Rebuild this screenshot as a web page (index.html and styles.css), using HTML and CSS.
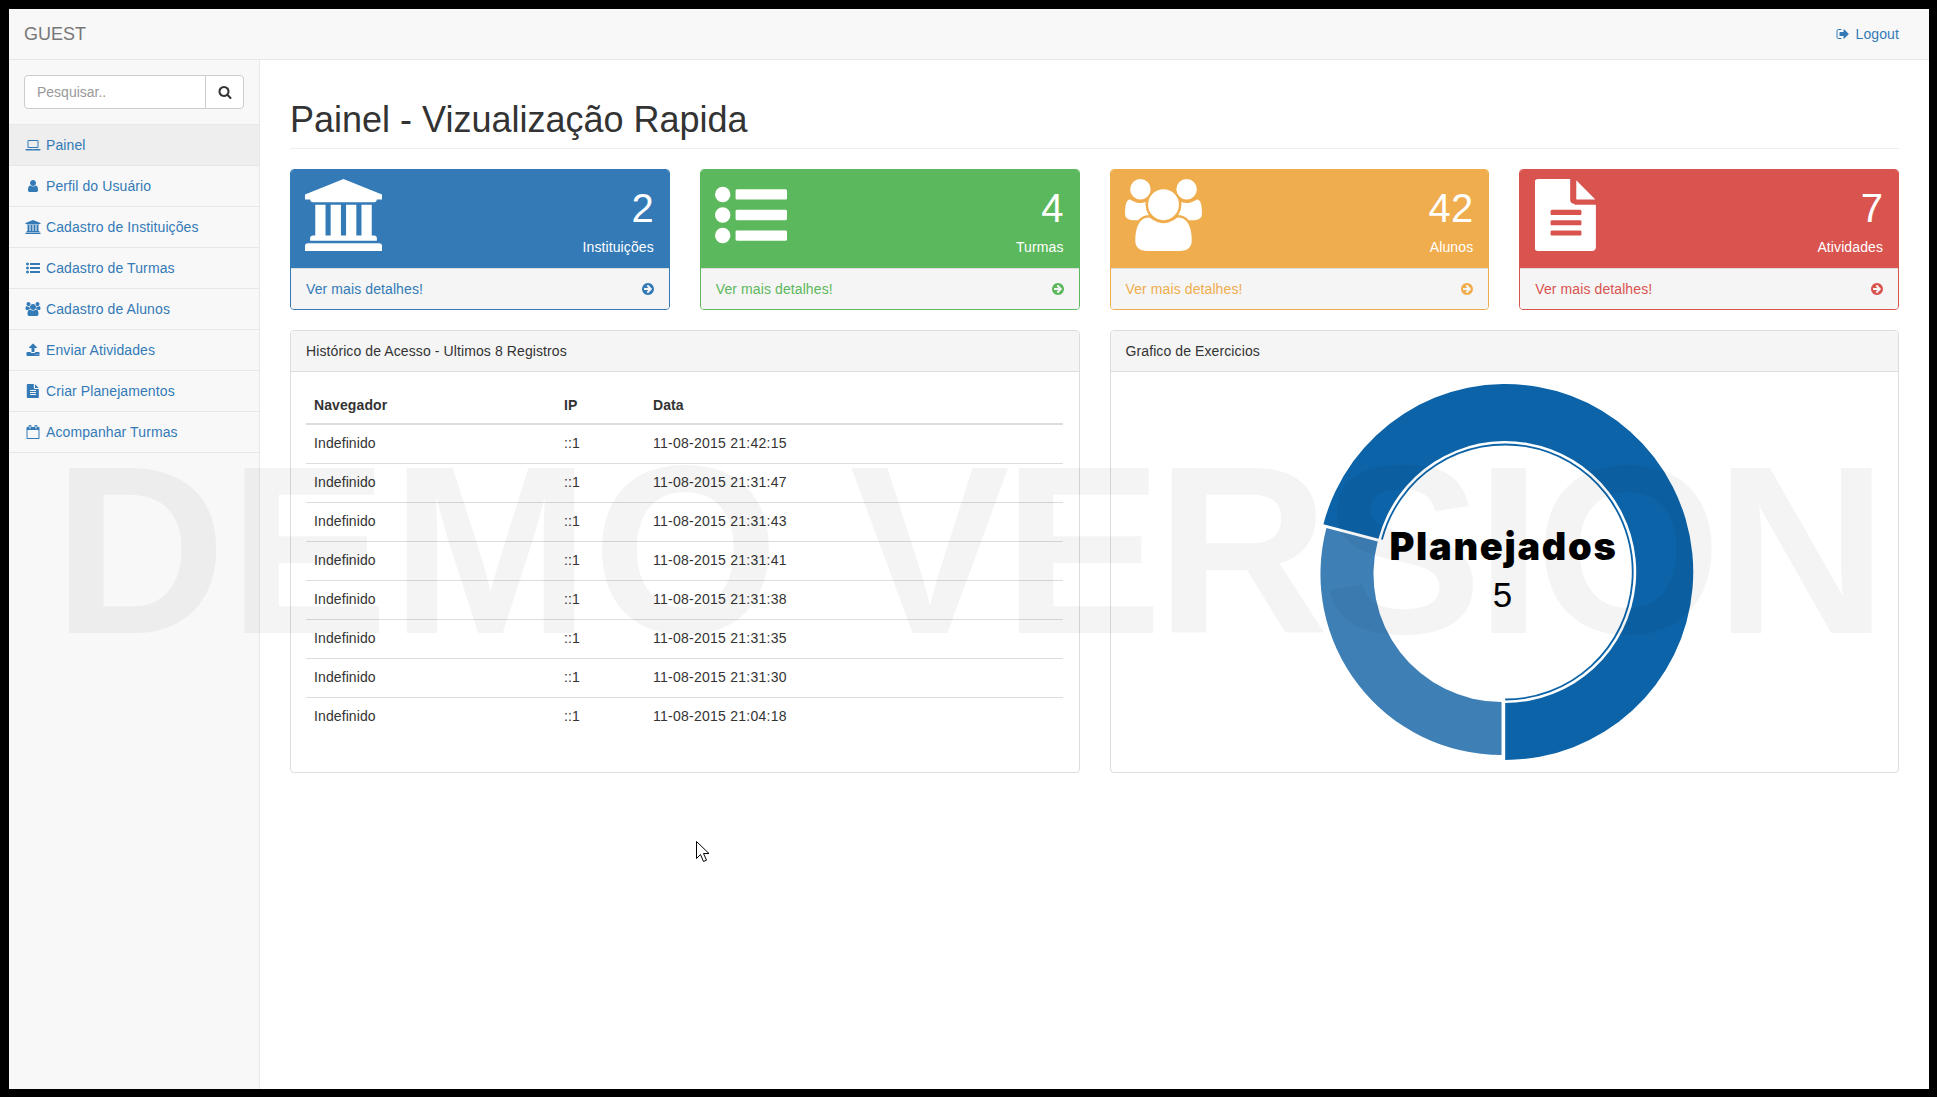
FILE: index.html
```html
<!DOCTYPE html>
<html lang="pt-BR">
<head>
    <meta charset="UTF-8">
    <title>Painel - Vizualização Rapida</title>
    <link rel="stylesheet" href="styles.css">
</head>
<body>
<!-- icon set -->
<svg class="defs" aria-hidden="true">
    <symbol id="i-bank" viewBox="0 0 1920 1792"><path d="M960 0l960 384v128h-128q0 26-20.5 45t-48.5 19h-1526q-28 0-48.5-19t-20.5-45h-128v-128zm-704 640h256v768h128v-768h256v768h128v-768h256v768h128v-768h256v768h59q28 0 48.5 19t20.5 45v64h-1664v-64q0-26 20.5-45t48.5-19h59v-768zm1595 960q28 0 48.5 19t20.5 45v128h-1920v-128q0-26 20.5-45t48.5-19h1782z"/></symbol>
    <symbol id="i-list" viewBox="0 0 1792 1792"><path d="M384 1408q0 80-56 136t-136 56-136-56-56-136 56-136 136-56 136 56 56 136zm0-512q0 80-56 136t-136 56-136-56-56-136 56-136 136-56 136 56 56 136zm1408 416v192q0 13-9.5 22.5t-22.5 9.5h-1216q-13 0-22.5-9.5t-9.5-22.5v-192q0-13 9.5-22.5t22.5-9.5h1216q13 0 22.5 9.5t9.5 22.5zm-1408-928q0 80-56 136t-136 56-136-56-56-136 56-136 136-56 136 56 56 136zm1408 416v192q0 13-9.5 22.5t-22.5 9.5h-1216q-13 0-22.5-9.5t-9.5-22.5v-192q0-13 9.5-22.5t22.5-9.5h1216q13 0 22.5 9.5t9.5 22.5zm0-512v192q0 13-9.5 22.5t-22.5 9.5h-1216q-13 0-22.5-9.5t-9.5-22.5v-192q0-13 9.5-22.5t22.5-9.5h1216q13 0 22.5 9.5t9.5 22.5z"/></symbol>
    <symbol id="i-users" viewBox="0 0 1920 1792"><path d="M593 896q-162 5-265 128h-134q-82 0-138-40.5t-56-118.5q0-353 124-353 6 0 43.5 21t97.5 42.5 119 21.5q67 0 133-23-5 37-5 66 0 139 81 256zm1071 637q0 120-73 189.5t-194 69.5h-874q-121 0-194-69.5t-73-189.5q0-53 3.5-103.5t14-109 26.5-108.5 43-97.5 62-81 85.5-53.5 111.5-20q10 0 43 21.5t73 48 107 48 135 21.5 135-21.5 107-48 73-48 43-21.5q61 0 111.5 20t85.5 53.5 62 81 43 97.5 26.5 108.5 14 109 3.5 103.5zm-1024-1277q0 106-75 181t-181 75-181-75-75-181 75-181 181-75 181 75 75 181zm704 384q0 159-112.5 271.5t-271.5 112.5-271.5-112.5-112.5-271.5 112.5-271.5 271.5-112.5 271.5 112.5 112.5 271.5zm576 225q0 78-56 118.5t-138 40.5h-134q-103-123-265-128 81-117 81-256 0-29-5-66 66 23 133 23 59 0 119-21.5t97.5-42.5 43.5-21q124 0 124 353zm-128-609q0 106-75 181t-181 75-181-75-75-181 75-181 181-75 181 75 75 181z"/></symbol>
    <symbol id="i-file" viewBox="128 0 1536 1792"><path d="M1596 476q14 14 28 36h-472v-472q22 14 36 28zm-476 164h520v1056q0 40-28 68t-68 28h-1344q-40 0-68-28t-28-68v-1600q0-40 28-68t68-28h800v520q0 40 28 68t68 28zm160 736v-64q0-14-9-23t-23-9h-704q-14 0-23 9t-9 23v64q0 14 9 23t23 9h704q14 0 23-9t9-23zm0-256v-64q0-14-9-23t-23-9h-704q-14 0-23 9t-9 23v64q0 14 9 23t23 9h704q14 0 23-9t9-23zm0-256v-64q0-14-9-23t-23-9h-704q-14 0-23 9t-9 23v64q0 14 9 23t23 9h704q14 0 23-9t9-23z"/></symbol>
    <symbol id="i-arrow" viewBox="128 0 1536 1792"><path d="M1413 896q0-27-18-45l-91-91-362-362q-18-18-45-18t-45 18l-91 91q-18 18-18 45t18 45l189 189h-502q-26 0-45 19t-19 45v128q0 26 19 45t45 19h502l-189 189q-19 19-19 45t19 45l91 91q18 18 45 18t45-18l362-362 91-91q18-18 18-45zm251 0q0 209-103 385.5t-279.5 279.5-385.5 103-385.5-103-279.5-279.5-103-385.5 103-385.5 279.5-279.5 385.5-103 385.5 103 279.5 279.5 103 385.5z"/></symbol>
    <symbol id="i-search" viewBox="0 0 1792 1792"><path d="M1216 832q0-185-131.5-316.5t-316.5-131.5-316.5 131.5-131.5 316.5 131.5 316.5 316.5 131.5 316.5-131.5 131.5-316.5zm512 832q0 52-38 90t-90 38q-54 0-90-38l-343-342q-179 124-399 124-143 0-273.5-55.5t-225-150-150-225-55.5-273.5 55.5-273.5 150-225 225-150 273.5-55.5 273.5 55.5 225 150 150 225 55.5 273.5q0 220-124 399l343 343q37 37 37 90z"/></symbol>
    <symbol id="i-user" viewBox="0 0 1792 1792"><path d="M1536 1399q0 109-62.5 187t-150.5 78h-854q-88 0-150.5-78t-62.5-187q0-85 8.5-160.5t31.5-152 58.5-131 94-89 134.5-34.5q131 128 313 128t313-128q76 0 134.5 34.5t94 89 58.5 131 31.5 152 8.5 160.5zm-256-887q0 159-112.5 271.5t-271.5 112.5-271.5-112.5-112.5-271.5 112.5-271.5 271.5-112.5 271.5 112.5 112.5 271.5z"/></symbol>
    <symbol id="i-laptop" viewBox="0 0 1920 1792"><path d="M416 1280q-66 0-113-47t-47-113v-704q0-66 47-113t113-47h1088q66 0 113 47t47 113v704q0 66-47 113t-113 47h-1088zm-32-864v704q0 13 9.5 22.5t22.5 9.5h1088q13 0 22.5-9.5t9.5-22.5v-704q0-13-9.5-22.5t-22.5-9.5h-1088q-13 0-22.5 9.5t-9.5 22.5zm1376 992h160v96q0 40-47 68t-113 28h-1600q-66 0-113-28t-47-68v-96h1760zm-720 96q16 0 16-16t-16-16h-160q-16 0-16 16t16 16h160z"/></symbol>
    <symbol id="i-upload" viewBox="0 0 1792 1792"><path d="M1344 1472q0-26-19-45t-45-19-45 19-19 45 19 45 45 19 45-19 19-45zm256 0q0-26-19-45t-45-19-45 19-19 45 19 45 45 19 45-19 19-45zm128-224v320q0 40-28 68t-68 28h-1472q-40 0-68-28t-28-68v-320q0-40 28-68t68-28h427q21 56 70.5 92t110.5 36h256q61 0 110.5-36t70.5-92h427q40 0 68 28t28 68zm-325-648q-17 40-59 40h-256v448q0 26-19 45t-45 19h-256q-26 0-45-19t-19-45v-448h-256q-42 0-59-40-17-39 14-69l448-448q18-19 45-19t45 19l448 448q31 30 14 69z"/></symbol>
    <symbol id="i-calendar" viewBox="0 0 1792 1792"><path d="M192 1664h1408v-1024h-1408v1024zm384-1216v-288q0-14-9-23t-23-9h-64q-14 0-23 9t-9 23v288q0 14 9 23t23 9h64q14 0 23-9t9-23zm768 0v-288q0-14-9-23t-23-9h-64q-14 0-23 9t-9 23v288q0 14 9 23t23 9h64q14 0 23-9t9-23zm384-64v1280q0 52-38 90t-90 38h-1408q-52 0-90-38t-38-90v-1280q0-52 38-90t90-38h128v-96q0-66 47-113t113-47h64q66 0 113 47t47 113v96h384v-96q0-66 47-113t113-47h64q66 0 113 47t47 113v96h128q52 0 90 38t38 90z"/></symbol>
    <symbol id="i-logout" viewBox="0 0 1792 1792"><path d="M704 1440q0 4 1 20t.5 26.5-3 23.5-10 19.5-20.5 6.5h-320q-119 0-203.5-84.5t-84.5-203.5v-704q0-119 84.5-203.5t203.5-84.5h320q13 0 22.5 9.5t9.5 22.5q0 4 1 20t.5 26.5-3 23.5-10 19.5-20.5 6.5h-320q-66 0-113 47t-47 113v704q0 66 47 113t113 47h312l11.5 1 11.5 3 8 5.5 7 9 2 13.5zm928-544q0 26-19 45l-544 544q-19 19-45 19t-45-19-19-45v-288h-448q-26 0-45-19t-19-45v-384q0-26 19-45t45-19h448v-288q0-26 19-45t45-19 45 19l544 544q19 19 19 45z"/></symbol>
</svg>

<div class="page">
    <nav class="navbar">
        <a class="brand" href="#">GUEST</a>
        <a class="logout" href="#"><svg class="fw"><use href="#i-logout"/></svg>Logout</a>
    </nav>

    <div class="wrapper">
        <aside class="sidebar">
            <div class="sidebar-search">
                <input type="text" placeholder="Pesquisar..">
                <button type="button"><svg class="ic14"><use href="#i-search"/></svg></button>
            </div>
            <ul class="side-menu">
                <li class="active"><a href="#"><svg class="fw"><use href="#i-laptop"/></svg>Painel</a></li>
                <li><a href="#"><svg class="fw"><use href="#i-user"/></svg>Perfil do Usuário</a></li>
                <li><a href="#"><svg class="fw"><use href="#i-bank"/></svg>Cadastro de Instituições</a></li>
                <li><a href="#"><svg class="fw"><use href="#i-list"/></svg>Cadastro de Turmas</a></li>
                <li><a href="#"><svg class="fw"><use href="#i-users"/></svg>Cadastro de Alunos</a></li>
                <li><a href="#"><svg class="fw"><use href="#i-upload"/></svg>Enviar Atividades</a></li>
                <li><a href="#"><svg class="fw"><use href="#i-file"/></svg>Criar Planejamentos</a></li>
                <li><a href="#"><svg class="fw"><use href="#i-calendar"/></svg>Acompanhar Turmas</a></li>
            </ul>
        </aside>

        <main class="content">
            <h1 class="page-header">Painel - Vizualização Rapida</h1>

            <div class="cards">
                <div class="card primary">
                    <div class="card-head">
                        <svg class="big-icon wide"><use href="#i-bank"/></svg>
                        <div class="card-info">
                            <div class="huge">2</div>
                            <div>Instituições</div>
                        </div>
                    </div>
                    <a class="card-foot" href="#"><span>Ver mais detalhes!</span><svg class="arrow"><use href="#i-arrow"/></svg></a>
                </div>
                <div class="card success">
                    <div class="card-head">
                        <svg class="big-icon square"><use href="#i-list"/></svg>
                        <div class="card-info">
                            <div class="huge">4</div>
                            <div>Turmas</div>
                        </div>
                    </div>
                    <a class="card-foot" href="#"><span>Ver mais detalhes!</span><svg class="arrow"><use href="#i-arrow"/></svg></a>
                </div>
                <div class="card warning">
                    <div class="card-head">
                        <svg class="big-icon wide"><use href="#i-users"/></svg>
                        <div class="card-info">
                            <div class="huge">42</div>
                            <div>Alunos</div>
                        </div>
                    </div>
                    <a class="card-foot" href="#"><span>Ver mais detalhes!</span><svg class="arrow"><use href="#i-arrow"/></svg></a>
                </div>
                <div class="card danger">
                    <div class="card-head">
                        <svg class="big-icon narrow"><use href="#i-file"/></svg>
                        <div class="card-info">
                            <div class="huge">7</div>
                            <div>Atividades</div>
                        </div>
                    </div>
                    <a class="card-foot" href="#"><span>Ver mais detalhes!</span><svg class="arrow"><use href="#i-arrow"/></svg></a>
                </div>
            </div>

            <div class="panels">
                <section class="panel">
                    <div class="panel-heading">Histórico de Acesso - Ultimos 8 Registros</div>
                    <div class="panel-body">
                        <table class="table">
                            <thead>
                                <tr><th class="col-nav">Navegador</th><th class="col-ip">IP</th><th>Data</th></tr>
                            </thead>
                            <tbody>
                                <tr><td>Indefinido</td><td>::1</td><td class="date">11-08-2015 21:42:15</td></tr>
                                <tr><td>Indefinido</td><td>::1</td><td class="date">11-08-2015 21:31:47</td></tr>
                                <tr><td>Indefinido</td><td>::1</td><td class="date">11-08-2015 21:31:43</td></tr>
                                <tr><td>Indefinido</td><td>::1</td><td class="date">11-08-2015 21:31:41</td></tr>
                                <tr><td>Indefinido</td><td>::1</td><td class="date">11-08-2015 21:31:38</td></tr>
                                <tr><td>Indefinido</td><td>::1</td><td class="date">11-08-2015 21:31:35</td></tr>
                                <tr><td>Indefinido</td><td>::1</td><td class="date">11-08-2015 21:31:30</td></tr>
                                <tr><td>Indefinido</td><td>::1</td><td class="date">11-08-2015 21:04:18</td></tr>
                            </tbody>
                        </table>
                    </div>
                </section>

                <section class="panel">
                    <div class="panel-heading">Grafico de Exercicios</div>
                    <div class="chart-body">
                        <svg class="donut" viewBox="0 0 400 400">
                            <path class="slice-dark" d="M19.4 152.3A188 188 0 1 1 201.2 388L201.2 331A131 131 0 1 0 74.5 166.8Z"/>
                            <path class="slice-light" d="M197.5 383A181 181 0 0 1 22.4 156L73.7 169.5A128 128 0 0 0 197.5 330Z"/>
                            <path class="ring" d="M77.9 167.6A127.5 127.5 0 1 1 201.2 327.5"/>
                            <text class="donut-title" x="199.5" y="188">Planejados</text>
                            <text class="donut-value" x="198.5" y="235">5</text>
                        </svg>
                    </div>
                </section>
            </div>
        </main>
    </div>

    <div class="watermark"><span class="wm-first">DEMO </span><span class="wm-second">VERSION</span></div>
    <svg class="cursor" viewBox="0 0 13 21"><path d="M.5.5v17l4-4 3 7 3-1.3-3-6.7h5.500z"/></svg>
</div>
</body>
</html>
```

FILE: styles.css
```css
* {
    box-sizing: border-box;
}
html, body {
    margin: 0;
    height: 100%;
}
body {
    background-color: #000;
    padding: 9px 8px 8px 9px;
    font-family: "Liberation Sans", Arial, sans-serif;
    font-size: 14px;
    line-height: 20px;
    letter-spacing: 0.1px;
    color: #333;
    overflow: hidden;
}
a {
    text-decoration: none;
    color: #337ab7;
}
.defs {
    display: none;
}
.page {
    position: relative;
    width: 1920px;
    height: 1080px;
    background-color: #fff;
    display: flex;
    flex-direction: column;
    overflow: hidden;
}

/* top bar */
.navbar {
    height: 51px;
    flex: none;
    background-color: #f8f8f8;
    border-bottom: 1px solid #e7e7e7;
    display: flex;
    justify-content: space-between;
    align-items: center;
    padding: 0 30px 0 15px;
}
.brand {
    font-size: 18px;
    letter-spacing: 0;
    color: #777;
}
.logout {
    display: flex;
    align-items: center;
}

/* icons */
.fw {
    width: 18px;
    height: 14px;
    margin-right: 4px;
    fill: currentColor;
    flex: none;
}
.ic14 {
    width: 14px;
    height: 14px;
    fill: #333;
    display: block;
}

/* sidebar */
.wrapper {
    flex: 1;
    display: flex;
    min-height: 0;
}
.sidebar {
    width: 251px;
    flex: none;
    background-color: #f8f8f8;
    border-right: 1px solid #e7e7e7;
}
.sidebar-search {
    display: flex;
    padding: 15px;
    border-bottom: 1px solid #e7e7e7;
}
.sidebar-search input {
    flex: 1;
    min-width: 0;
    height: 34px;
    padding: 6px 12px;
    border: 1px solid #ccc;
    border-radius: 4px 0 0 4px;
    font: 14px "Liberation Sans", Arial, sans-serif;
    color: #555;
    background-color: #fff;
}
.sidebar-search input::placeholder {
    color: #999;
}
.sidebar-search button {
    width: 39px;
    height: 34px;
    margin-left: -1px;
    padding: 0;
    border: 1px solid #ccc;
    border-radius: 0 4px 4px 0;
    background-color: #fff;
    display: flex;
    justify-content: center;
    align-items: center;
}
.side-menu {
    list-style: none;
    margin: 0;
    padding: 0;
}
.side-menu li {
    border-bottom: 1px solid #e7e7e7;
}
.side-menu a {
    display: flex;
    align-items: center;
    height: 40px;
    padding: 0 15px;
}
.side-menu .active a {
    background-color: #eee;
}

/* main area */
.content {
    flex: 1;
    padding: 0 30px;
}
.page-header {
    margin: 40px 0 20px;
    padding-bottom: 9px;
    border-bottom: 1px solid #eee;
    font-size: 36px;
    font-weight: 500;
    line-height: 39px;
    letter-spacing: 0;
}

/* stat cards */
.cards {
    display: grid;
    grid-template-columns: repeat(4, 1fr);
    gap: 30px;
    margin-bottom: 20px;
}
.card {
    border: 1px solid;
    border-radius: 4px;
    overflow: hidden;
}
.card-head {
    height: 98px;
    padding: 10px 15px;
    color: #fff;
    display: flex;
    justify-content: space-between;
}
.big-icon {
    height: 72px;
    margin: -1px 0 0 -1px;
    fill: #fff;
}
.big-icon.wide {
    width: 77px;
}
.big-icon.square {
    width: 72px;
}
.big-icon.narrow {
    width: 62px;
    margin-left: 0;
}
.card-info {
    text-align: right;
}
.huge {
    font-size: 40px;
    line-height: 57px;
}
.card-foot {
    display: flex;
    justify-content: space-between;
    align-items: center;
    height: 41px;
    padding: 0 15px;
    background-color: #f5f5f5;
    border-top: 1px solid #ddd;
}
.arrow {
    width: 12px;
    height: 14px;
    fill: currentColor;
}
.primary {
    border-color: #337ab7;
}
.primary .card-head {
    background-color: #337ab7;
}
.primary .card-foot {
    color: #337ab7;
}
.success {
    border-color: #5cb85c;
}
.success .card-head {
    background-color: #5cb85c;
}
.success .card-foot {
    color: #5cb85c;
}
.warning {
    border-color: #f0ad4e;
}
.warning .card-head {
    background-color: #f0ad4e;
}
.warning .card-foot {
    color: #f0ad4e;
}
.danger {
    border-color: #d9534f;
}
.danger .card-head {
    background-color: #d9534f;
}
.danger .card-foot {
    color: #d9534f;
}

/* panels */
.panels {
    display: grid;
    grid-template-columns: 1fr 1fr;
    gap: 30px;
}
.panel {
    border: 1px solid #ddd;
    border-radius: 4px;
    overflow: hidden;
}
.panel-heading {
    padding: 10px 15px;
    background-color: #f5f5f5;
    border-bottom: 1px solid #ddd;
}
.panel-body {
    padding: 15px 16px 15px 15px;
}
.table {
    width: 100%;
    margin-bottom: 20px;
    border-collapse: collapse;
}
.table th {
    padding: 8px;
    text-align: left;
    border-bottom: 2px solid #ddd;
}
.table td {
    padding: 8px 8px 10px;
}
.table .date {
    letter-spacing: 0.25px;
}
.table tbody tr + tr td {
    border-top: 1px solid #ddd;
}
.col-nav {
    width: 250px;
}
.col-ip {
    width: 89px;
}

/* donut */
.chart-body {
    display: flex;
    justify-content: center;
}
.donut {
    width: 400px;
    height: 400px;
    display: block;
}
.slice-dark {
    fill: #0c63a7;
}
.slice-light {
    fill: #3e80b6;
}
.ring {
    fill: none;
    stroke: #0c63a7;
    stroke-width: 1.8;
}
.donut-title {
    font-family: Inter, "Liberation Sans", sans-serif;
    font-size: 38px;
    font-weight: 900;
    letter-spacing: 1.7px;
    fill: #000;
    text-anchor: middle;
}
.donut-value {
    font-size: 35px;
    letter-spacing: 0;
    fill: #000;
    text-anchor: middle;
}

/* overlays */
.watermark {
    position: absolute;
    left: 44px;
    top: 421px;
    font-size: 240px;
    font-weight: 700;
    line-height: 1;
    white-space: pre;
    color: rgba(0, 0, 0, 0.045);
    pointer-events: none;
}
.wm-first {
    letter-spacing: 2px;
}
.wm-second {
    letter-spacing: -7px;
}
.cursor {
    position: absolute;
    left: 687px;
    top: 832px;
    width: 13px;
    height: 21px;
}
.cursor path {
    fill: #fff;
    stroke: #000;
    stroke-width: 1;
}
```
